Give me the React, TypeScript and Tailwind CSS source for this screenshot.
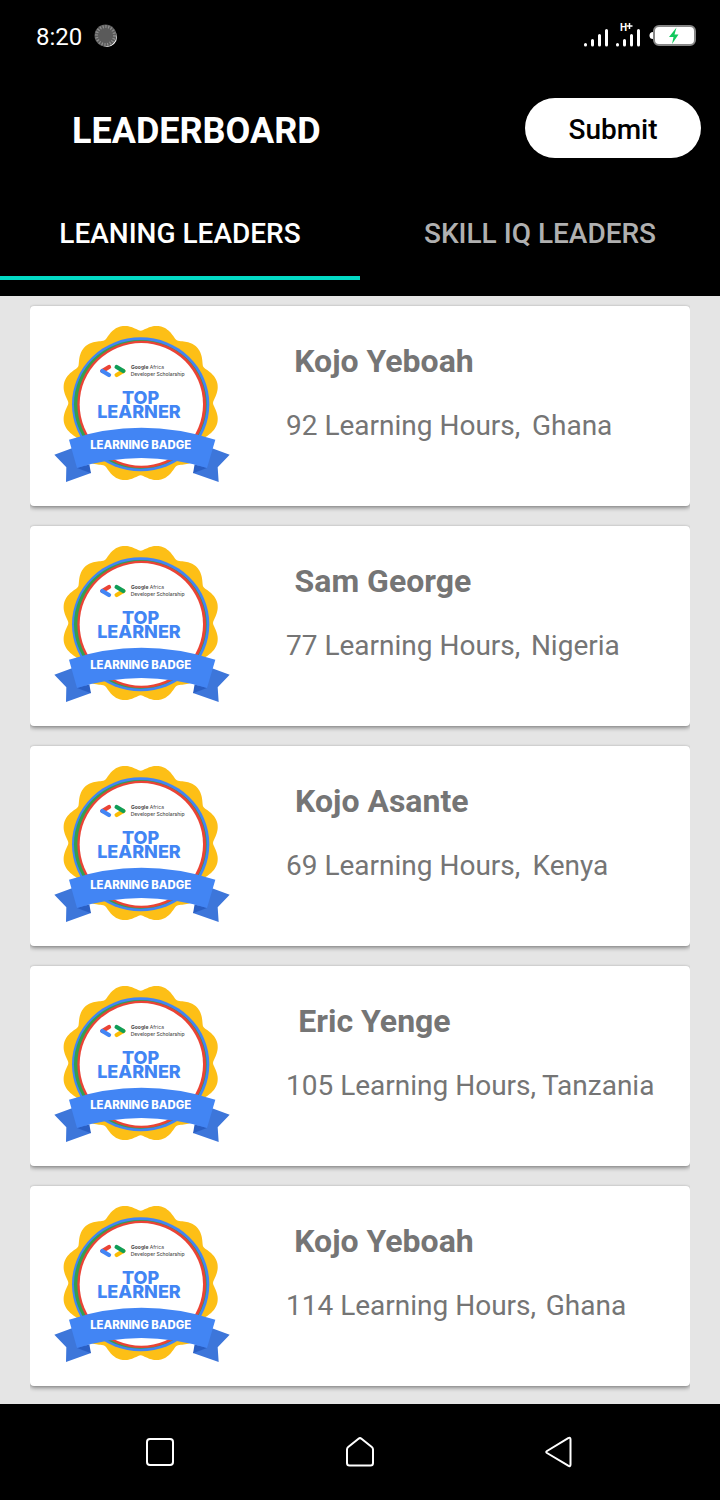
import React from "react";

type Leader = { name: string; hours: number; country: string };

const leaders: Leader[] = [
  { name: "Kojo Yeboah", hours: 92, country: "Ghana" },
  { name: "Sam George", hours: 77, country: "Nigeria" },
  { name: "Kojo Asante", hours: 69, country: "Kenya" },
  { name: "Eric Yenge", hours: 105, country: "Tanzania" },
  { name: "Kojo Yeboah", hours: 114, country: "Ghana" },
];

const LOBES = 12;

/* Scalloped seal edge: round lobes that meet in narrower notches. */
function sealPath(cx: number, cy: number, inner: number, depth: number) {
  const points: string[] = [];
  for (let i = 0; i < 360; i++) {
    const a = (i / 360) * Math.PI * 2;
    const wave = Math.sin((LOBES / 2) * a);
    const r = inner + depth * Math.sqrt(wave * wave + 0.04);
    points.push(`${(cx + r * Math.sin(a)).toFixed(1)} ${(cy - r * Math.cos(a)).toFixed(1)}`);
  }
  return `M${points.join("L")}Z`;
}

const seal = sealPath(302, 279, 212, 25);

function Badge() {
  return (
    <svg viewBox="0 0 600 570" className="h-[190px] w-[200px] shrink-0" role="img" aria-label="Top learner badge">
      <path d={seal} fill="#fdbf16" />
      <ellipse cx="302" cy="283" rx="206" ry="201" fill="#4285f4" />
      <ellipse cx="301" cy="283" rx="199" ry="193" fill="#34a04f" />
      <ellipse cx="305" cy="283" rx="193" ry="191" fill="#ea4335" />
      <ellipse cx="304" cy="283" rx="185" ry="184" fill="#fff" />
      <g strokeWidth="13" strokeLinecap="round" fill="none">
        <path d="M207 171L187 183" stroke="#ea4335" />
        <path d="M187 183L207 195" stroke="#4285f4" />
        <path d="M230 195L250 183" stroke="#fbbc04" />
        <path d="M230 171L250 183" stroke="#0f9d58" />
      </g>
      <g fontFamily="Inter, sans-serif" fill="#4a4a4a" fontSize="15">
        <text x="273" y="177"><tspan fontWeight="700">Google</tspan> Africa</text>
        <text x="272" y="197" fontWeight="500">Developer Scholarship</text>
      </g>
      <text fontFamily="Inter, sans-serif" fill="#4285f4" fontWeight="800" fontSize="54" textAnchor="middle">
        <tspan x="302" y="281">TOP</tspan>
        <tspan x="297" y="325">LEARNER</tspan>
      </text>
      <path d="M43 434L100 413L153 489L78 516L79 472Z" fill="#3d76da" />
      <path d="M569 434L512 413L459 489L536 516L533 472Z" fill="#3d76da" />
      <path d="M111 474L148 463L153 490Z" fill="#2a5fc4" />
      <path d="M501 474L464 463L459 490Z" fill="#2a5fc4" />
      <path d="M87 389Q302 318 526 389L501 474Q302 414 111 474Z" fill="#4285f4" />
      <text x="302" y="416" fontFamily="Inter, sans-serif" fontWeight="800" fontSize="34" fill="#fff" textAnchor="middle">
        LEARNING BADGE
      </text>
    </svg>
  );
}

function StatusBar() {
  return (
    <div className="flex h-[72px] items-center justify-between pr-6 pl-9">
      <div className="flex items-center gap-3">
        <span className="pt-[2px] text-2xl">8:20</span>
        <svg viewBox="0 0 24 24" className="size-6" aria-hidden="true">
          <circle cx="13" cy="13" r="10" fill="#fff" />
          <circle cx="11.500" cy="11.500" r="11" fill="#5a5a5a" />
          <circle cx="11.500" cy="11.500" r="9" fill="none" stroke="#8f8f8f" strokeWidth="3" strokeDasharray="1.200 1.600" />
        </svg>
      </div>
      <svg viewBox="0 0 112 28" className="h-7 w-28" aria-hidden="true">
        <g stroke="#fff" strokeWidth="3" strokeLinecap="round">
          <path d="M1.500 22.500V23M8.500 18.500V23M15.500 13.500V23M22.500 8.500V23" />
          <path d="M33.500 22.500V23M40.500 18.500V23M47.500 13.500V23M54.500 8.500V23" />
        </g>
        <text x="36" y="9" fill="#fff" fontFamily="Roboto, sans-serif" fontWeight="700" fontSize="10">H</text>
        <path d="M45.500 1V7M42.500 4H48.500" stroke="#fff" strokeWidth="1.500" />
        <path d="M69 10a3.500 3.500 0 0 0 0 7z" fill="#fff" />
        <rect x="70" y="4" width="41" height="19" rx="5" fill="#fff" stroke="#868686" strokeWidth="2" />
        <path d="M92.500 5.500L85 15H89.500L88 22L94.500 12.500H90.500Z" fill="#12c95d" />
      </svg>
    </div>
  );
}

function LeaderCard({ name, hours, country }: Leader) {
  return (
    <li className="overflow-hidden py-[10px]">
      <article className="flex h-[200px] rounded-sm bg-white pt-1 pl-[10px] text-[#757575] shadow-[0_2px_4px_rgba(0,0,0,0.4),0_0_2px_rgba(0,0,0,0.15)]">
        <Badge />
        <div className="flex min-w-0 grow flex-col pt-8">
          <div className="flex pl-4 before:grow-[3] after:grow-[17]">
            <h2 className="text-[32px] leading-[38px] font-bold">{name}</h2>
          </div>
          <div className="flex pt-7 pl-[46px] text-[28px] leading-9 whitespace-nowrap">
            <span>{hours} Learning Hours,</span>
            <span className="flex grow pl-px before:grow-[3] after:grow-[22]">
              <span>{country}</span>
            </span>
          </div>
        </div>
      </article>
    </li>
  );
}

function NavBar() {
  return (
    <nav className="grid h-24 grid-cols-3 items-center bg-black px-[60px]">
      <button type="button" aria-label="Recent apps" className="justify-self-center">
        <svg viewBox="0 0 32 32" className="size-8" fill="none" stroke="#fff" strokeWidth="2">
          <rect x="3" y="3" width="26" height="26" rx="3" />
        </svg>
      </button>
      <button type="button" aria-label="Home" className="justify-self-center">
        <svg viewBox="0 0 32 32" className="size-8" fill="none" stroke="#fff" strokeWidth="2" strokeLinejoin="round">
          <path d="M3 13.500Q3 12 4.200 11L14.500 2.700Q16 1.500 17.500 2.700L27.800 11Q29 12 29 13.500V27Q29 29.500 26.500 29.500H5.500Q3 29.500 3 27Z" />
        </svg>
      </button>
      <button type="button" aria-label="Back" className="justify-self-center">
        <svg viewBox="0 0 32 32" className="size-8" fill="none" stroke="#fff" strokeWidth="2" strokeLinejoin="round">
          <path d="M24.200 2.200Q26.500 1 26.500 3.500V28.500Q26.500 31 24.200 29.700L3 17Q1.500 16 3 15Z" />
        </svg>
      </button>
    </nav>
  );
}

export default function App() {
  return (
    <div className="flex min-h-screen flex-col bg-[#e5e5e5] font-['Roboto',sans-serif]">
      <header className="bg-black pb-4 text-white">
        <StatusBar />
        <div className="flex h-28 items-center justify-between pr-[19px] pl-[72px]">
          <h1 className="pt-[6px] text-4xl font-bold">LEADERBOARD</h1>
          <button type="button" className="h-[60px] w-44 rounded-full bg-white pt-1 text-[28px] font-medium text-black">
            Submit
          </button>
        </div>
        <div role="tablist" className="grid h-24 grid-cols-2 text-[28px] font-medium">
          <button type="button" role="tab" aria-selected="true" className="border-b-4 border-[#03dac5] pt-2">
            LEANING LEADERS
          </button>
          <button type="button" role="tab" aria-selected="false" className="border-b-4 border-transparent pt-2 text-[#b0b0b0]">
            SKILL IQ LEADERS
          </button>
        </div>
      </header>
      <main className="grow px-[30px] pb-2">
        <ul>
          {leaders.map((leader, i) => (
            <LeaderCard key={i} {...leader} />
          ))}
        </ul>
      </main>
      <NavBar />
    </div>
  );
}
